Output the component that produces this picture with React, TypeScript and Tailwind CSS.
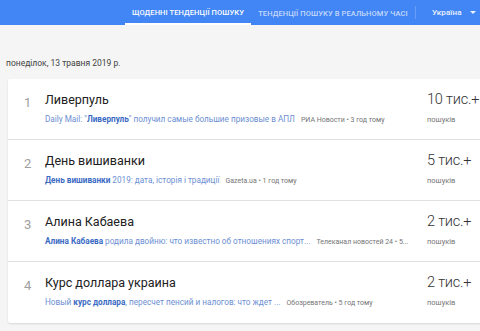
import { ReactNode } from "react";

type Trend = {
  rank: number;
  title: string;
  snippet: ReactNode;
  source: string;
  count: string;
};

const trends: Trend[] = [
  {
    rank: 1,
    title: "Ливерпуль",
    snippet: (
      <>
        Daily Mail: "<b className="font-bold text-[#3b6bc4]">Ливерпуль</b>" получил самые большие призовые в АПЛ
      </>
    ),
    source: "РИА Новости • 3 год тому",
    count: "10 тис.+",
  },
  {
    rank: 2,
    title: "День вишиванки",
    snippet: (
      <>
        <b className="font-bold text-[#3b6bc4]">День вишиванки</b> 2019: дата, історія і традиції
      </>
    ),
    source: "Gazeta.ua • 1 год тому",
    count: "5 тис.+",
  },
  {
    rank: 3,
    title: "Алина Кабаева",
    snippet: (
      <>
        <b className="font-bold text-[#3b6bc4]">Алина Кабаева</b> родила двойню: что известно об отношениях спорт...
      </>
    ),
    source: "Телеканал новостей 24 • 5...",
    count: "2 тис.+",
  },
  {
    rank: 4,
    title: "Курс доллара украина",
    snippet: (
      <>
        Новый <b className="font-bold text-[#3b6bc4]">курс доллара</b>, пересчет пенсий и налогов: что ждет ...
      </>
    ),
    source: "Обозреватель • 5 год тому",
    count: "2 тис.+",
  },
];

function Header() {
  return (
    <div className="flex h-[25px] items-stretch bg-[#4285f4] text-[7.5px] font-medium tracking-[0.1px] text-white">
      <div className="w-[125px]" />
      <div className="flex w-[126px] items-center justify-center border-b-2 border-white pt-[2px]">
        ЩОДЕННІ ТЕНДЕНЦІЇ ПОШУКУ
      </div>
      <div className="flex w-[164px] items-center justify-center pt-[2px] text-white/70">
        ТЕНДЕНЦІЇ ПОШУКУ В РЕАЛЬНОМУ ЧАСІ
      </div>
      <div className="my-[6px] w-px bg-white/20" />
      <div className="flex flex-1 items-center pl-[16px] text-[8px] text-white/90">
        Україна
        <span className="ml-[8px] h-0 w-0 border-x-[3px] border-t-[3px] border-x-transparent border-t-white/90" />
      </div>
    </div>
  );
}

function TrendRow({ trend, last }: { trend: Trend; last: boolean }) {
  return (
    <div className={`flex h-[61px] items-start ${last ? "" : "border-b border-[#e0e0e0]"}`}>
      <div className="w-[37px] pt-[14px] pl-[16px] text-[13px] text-[#9e9e9e]">{trend.rank}</div>
      <div className="flex min-w-0 flex-1 flex-col pt-[13px]">
        <div className="text-[12.5px] leading-[16px] text-[#212121]">{trend.title}</div>
        <div className="mt-[5px] flex items-baseline whitespace-nowrap">
          <span className="text-[8.2px] text-[#6d8fd3]">{trend.snippet}</span>
          <span className="ml-[6px] text-[7px] text-[#757575]">{trend.source}</span>
        </div>
      </div>
      <div className="w-[63px] shrink-0 whitespace-nowrap pt-[11px]">
        <div className="text-[14.5px] leading-[20px] font-light tracking-[-0.2px] text-[#333]">{trend.count}</div>
        <div className="mt-[4px] text-[7.5px] text-[#757575]">пошуків</div>
      </div>
    </div>
  );
}

export default function App() {
  return (
    <div className="h-[331px] w-[480px] overflow-hidden bg-[#f5f5f5] font-['Roboto',sans-serif]">
      <Header />
      <div className="pt-[32px] pl-[6px] text-[8.5px] text-[#424242]">понеділок, 13 травня 2019 р.</div>
      <div className="mt-[9px] ml-[8px] w-[482px] rounded-[2px] bg-white shadow-[0_1px_2px_rgba(0,0,0,0.12)]">
        {trends.map((t, i) => (
          <TrendRow key={t.rank} trend={t} last={i === trends.length - 1} />
        ))}
      </div>
    </div>
  );
}
